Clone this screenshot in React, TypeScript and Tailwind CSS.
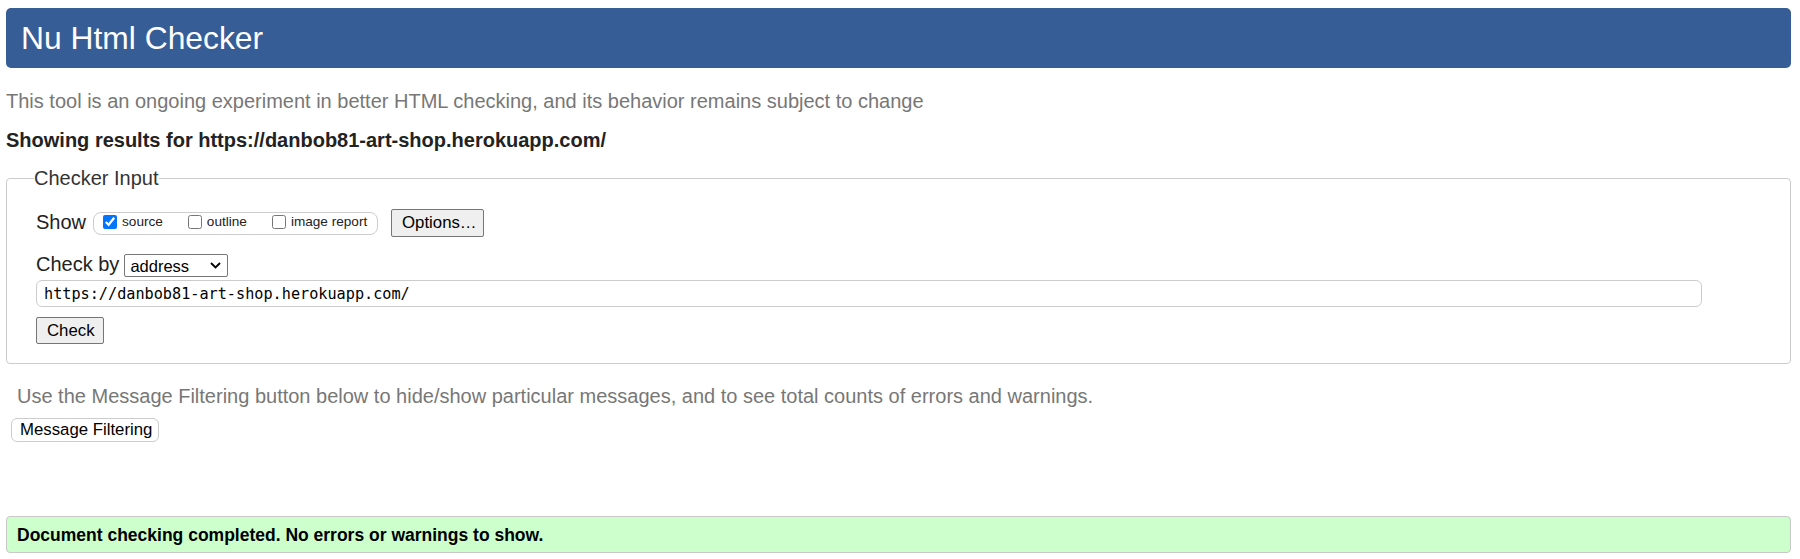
import type { ReactNode } from "react";

const sans = "font-['Liberation_Sans',Arial,sans-serif]";

function GrayButton({ children, className = "" }: { children: ReactNode; className?: string }) {
  return (
    <button
      type="button"
      className={`flex items-center rounded-[2px] border border-[#767676] bg-[#efefef] text-[16.8px] leading-[20px] text-black ${className}`}
    >
      {children}
    </button>
  );
}

function Check({ label, checked = false, className = "" }: { label: string; checked?: boolean; className?: string }) {
  return (
    <label className={`flex items-baseline ${className}`}>
      <input type="checkbox" defaultChecked={checked} className="m-0 mt-[1px] h-[14px] w-[14px] self-start" />
      <span className="ml-[5px] text-[13.6px] leading-[16px] text-[#222]">{label}</span>
    </label>
  );
}

export default function App() {
  return (
    <div className={`min-h-[559px] bg-white pl-[6px] pr-[9px] pt-[8px] ${sans}`}>
      <header className="flex h-[60px] items-center rounded-[5px] bg-[#365d95] pl-[15px]">
        <h1 className="text-[31.8px] leading-[36px] text-white">Nu Html Checker</h1>
      </header>

      <p className="mt-[22px] text-[20px] leading-[22px] text-[#777]">
        This tool is an ongoing experiment in better HTML checking, and its behavior remains subject to change
      </p>
      <p className="mt-[17px] text-[20px] font-bold leading-[22px] text-[#222]">
        Showing results for https://danbob81-art-shop.herokuapp.com/
      </p>

      <fieldset className="mt-[16px] rounded-[4px] border border-[#cccccc] pb-[19px] pl-[29px] pr-[88px]">
        <legend className="-ml-[2px] text-[20px] leading-[22px] text-[#333]">Checker Input</legend>
        <div className="pt-[20px]">
          <div className="flex h-[28px] items-center">
            <span className="pb-[3px] text-[20px] leading-[22px] text-[#222]">Show</span>
            <div className="ml-[7px] flex h-[23px] w-[285px] items-start rounded-[8px] border border-[#cccccc] pl-[9px] pt-[1px]">
              <Check label="source" checked />
              <Check label="outline" className="ml-[25px]" />
              <Check label="image report" className="ml-[25px]" />
            </div>
            <GrayButton className="ml-[13px] h-[28px] w-[93px] pl-[10px]">Options…</GrayButton>
          </div>

          <div className="mt-[17px] flex h-[23px] items-center">
            <span className="pb-[3px] text-[20px] leading-[22px] text-[#222]">Check by</span>
            <div className="ml-[5px] flex h-[23px] w-[104px] items-center justify-between rounded-[2px] border border-[#767676] bg-white pl-[5px] pr-[6px]">
              <span className="text-[16.5px] leading-[20px] text-black">address</span>
              <svg width="11" height="7" viewBox="0 0 11 7" fill="none">
                <path d="M1 1 L5.5 5.5 L10 1" stroke="#000" strokeWidth="1.8" />
              </svg>
            </div>
          </div>

          <div className="mt-[3px] flex h-[27px] w-full items-center rounded-[6px] border border-[#cccccc] pl-[7px]">
            <span className="font-['DejaVu_Sans_Mono',monospace] text-[15.2px] leading-[18px] text-black">
              https://danbob81-art-shop.herokuapp.com/
            </span>
          </div>

          <GrayButton className="mt-[10px] h-[27px] w-[68px] pl-[10px]">Check</GrayButton>
        </div>
      </fieldset>

      <p className="ml-[11px] mt-[21px] text-[20px] leading-[22px] text-[#777]">
        Use the Message Filtering button below to hide/show particular messages, and to see total counts of errors and warnings.
      </p>
      <button
        type="button"
        className="ml-[5px] mt-[11px] flex h-[24px] w-[148px] items-center rounded-[6px] border border-[#cccccc] bg-white pl-[8px] text-[16.8px] leading-[20px] text-black"
      >
        Message Filtering
      </button>

      <div className="mt-[74px] flex h-[37px] items-center rounded-[4px] border border-[#c8c8c8] bg-[#ccffcc] pl-[10px]">
        <span className="text-[17.5px] font-bold leading-[20px] text-black">
          Document checking completed. No errors or warnings to show.
        </span>
      </div>
    </div>
  );
}
